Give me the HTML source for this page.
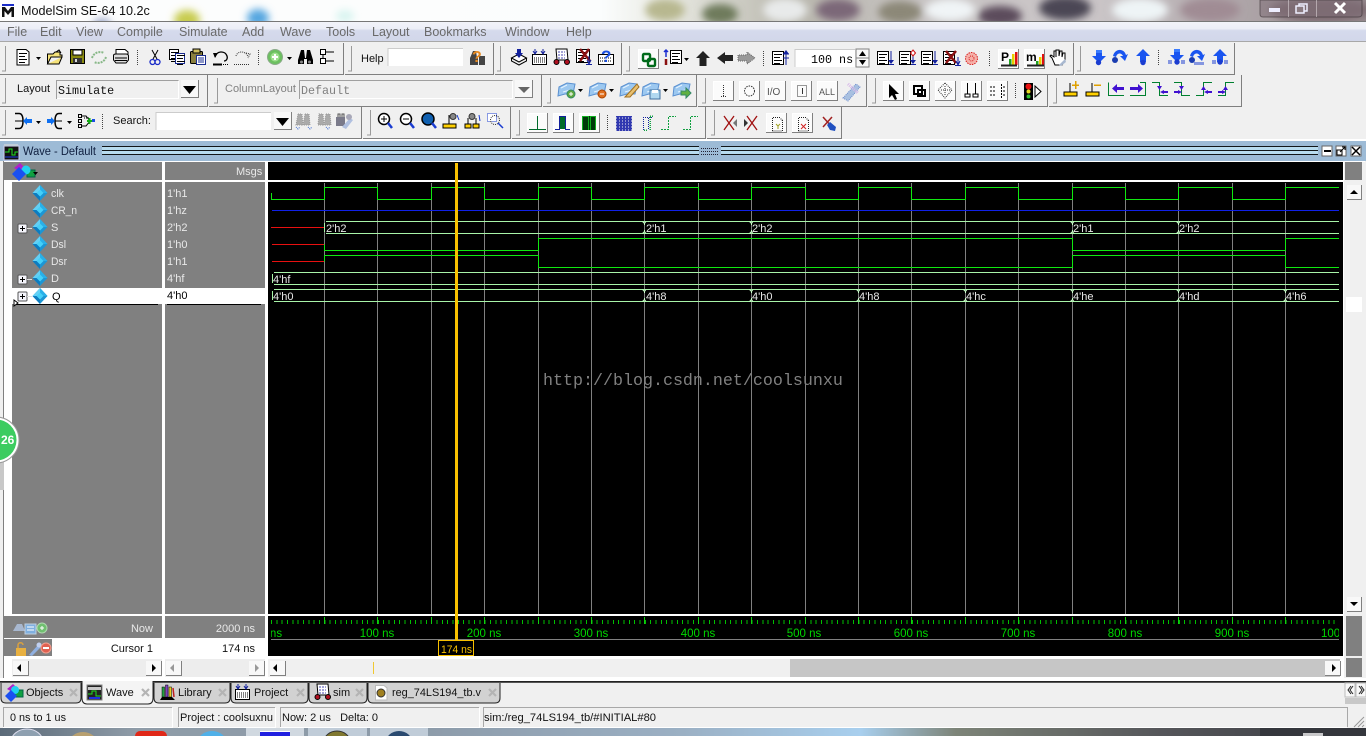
<!DOCTYPE html>
<html><head><meta charset="utf-8"><title>ModelSim SE-64 10.2c</title>
<style>
html,body{margin:0;padding:0;background:#f0f0f0;overflow:hidden}
svg{display:block;position:absolute;left:0;top:0}
text{font-family:"Liberation Sans",sans-serif;font-size:11.5px;white-space:pre}
.c{shape-rendering:crispEdges}
.m{fill:#6a6a6a;font-size:12.5px}
.n{fill:#e8e8e8;font-size:11px}
.w{fill:#e8e8e8;font-size:11px}
.r{fill:#00d800;font-size:11.5px;text-anchor:middle}
.mono{font-family:"Liberation Mono",monospace;font-size:11.7px}
.t{font-size:11px;fill:#111}
.s{font-size:11px;fill:#111}
.x{stroke:#b4b4b4;stroke-width:2.2;fill:none}
</style></head><body>
<svg width="1366" height="736" viewBox="0 0 1366 736" xmlns="http://www.w3.org/2000/svg">
<defs>
<linearGradient id="mg" x1="0" y1="0" x2="0" y2="1"><stop offset="0" stop-color="#f2f3f9"/><stop offset=".35" stop-color="#eceef7"/><stop offset=".45" stop-color="#d5daec"/><stop offset="1" stop-color="#d2d7ea"/></linearGradient>
<linearGradient id="wp" x1="0" y1="0" x2="1" y2="0"><stop offset="0" stop-color="#fdfdfd"/><stop offset=".44" stop-color="#fbfdfd"/><stop offset=".49" stop-color="#e8e9e2"/><stop offset=".58" stop-color="#b8b6ac"/><stop offset=".68" stop-color="#c8c4c4"/><stop offset=".8" stop-color="#cbc6c8"/><stop offset="1" stop-color="#968a8e"/></linearGradient>
<linearGradient id="tb" x1="0" y1="0" x2="1" y2="0"><stop offset="0" stop-color="#5b6a78"/><stop offset=".1" stop-color="#8f9ca8"/><stop offset=".3" stop-color="#8c9aa8"/><stop offset=".5" stop-color="#9bb0c4"/><stop offset=".63" stop-color="#a8cfee"/><stop offset=".7" stop-color="#7d8478"/><stop offset=".85" stop-color="#55565a"/><stop offset="1" stop-color="#3a3c42"/></linearGradient>
<filter id="b3" x="-50%" y="-50%" width="200%" height="200%"><feGaussianBlur stdDeviation="4"/></filter>
<clipPath id="top"><rect width="1366" height="22"/></clipPath>
<clipPath id="ruler"><rect x="271" y="625" width="1068" height="14"/></clipPath>
<clipPath id="bot"><rect y="728" width="1366" height="8"/></clipPath>

<g id="dia"><path d="M0-8 7.5 0 0 8-7.5 0Z" fill="#1c96d4"/><path d="M0-8-7.5 0H0Z" fill="#63d0f5"/><path d="M0-8 7.5 0H0Z" fill="#29b0e8"/><path d="M-7.5 0 0 8V0Z" fill="#0c7cc0"/><path d="M-3.5 0 0-3.5 3.5 0 0 3.5Z" fill="#45d0f8"/></g>
<g id="plus"><rect x="0" y="0" width="9" height="9" rx="1" fill="#f4f4fa" stroke="#555"/><path class="c" d="M2 4.5H7M4.5 2V7" stroke="#000" fill="none"/><path class="c" d="M9 4.5H14" stroke="#ddd" fill="none"/></g>
<g id="btn"><rect width="20" height="19" fill="#fbfbfb"/><path class="c" d="M.5 19V.5H20" stroke="#fff" fill="none"/><path class="c" d="M0 19.5H20.5V0" stroke="#808080" fill="none"/></g>
<g id="dd"><path d="M0 0H5L2.5 3Z" fill="#000"/></g>
<g id="tr"><path d="M-1.5 .5 .5 2.5 2 .5M-1.5 12.5 .5 10.5 2 12.5M.5 2.5V4M.5 9V10.5" stroke="#c8ffc8" fill="none"/></g>
<g id="flag"><path d="M1 5 9 1 17 2 15 12 7 12 0 14Z" fill="#9cc8f0" stroke="#5a90d0"/><path d="M3 6 9 3M5 10 12 8" stroke="#e4f2ff" fill="none"/></g>
<g id="step"><path d="M4 0H10V6H14L7 13 0 6H4Z" fill="#1a55f0"/><path d="M4 0H10V3H4Z" fill="#3a7cff"/></g>
<g id="stepu"><path d="M7 0 14 7H10V13H4V7H0Z" fill="#1a55f0"/></g>
<g id="over"><path d="M1 7C3-1 12-1 14 6L16 5 13 12 8 7 11 7C9 3 5 4 4 8Z" fill="#1a55f0"/><circle cx="3" cy="11" r="3" fill="#1a3cb0"/></g>
<g id="lines"><path class="c" d="M0 .5H8M0 3.5H6M0 6.5H8M0 9.5H6" stroke="#000" fill="none"/></g>
<g id="cur"><path class="c" d="M6 0V9" stroke="#000" fill="none"/><rect x="0" y="9" width="13" height="4" fill="#ffd000" stroke="#000"/></g>
</defs>

<!-- window chrome / wallpaper -->
<rect width="1366" height="22" fill="url(#wp)"/>
<g clip-path="url(#top)" filter="url(#b3)">
<ellipse cx="187" cy="20" rx="13" ry="10" fill="#c8cc50"/><ellipse cx="258" cy="18" rx="11" ry="9" fill="#55a6e0"/><ellipse cx="102" cy="23" rx="9" ry="4" fill="#8d9ac0"/><ellipse cx="345" cy="16" rx="9" ry="6" fill="#d8f4f0"/>
<ellipse cx="665" cy="10" rx="20" ry="11" fill="#b8b890"/><ellipse cx="720" cy="14" rx="18" ry="10" fill="#6e7a5c"/><ellipse cx="785" cy="10" rx="22" ry="12" fill="#e8eaea"/><ellipse cx="838" cy="10" rx="22" ry="11" fill="#7c6878"/><ellipse cx="900" cy="12" rx="22" ry="11" fill="#8c8878"/><ellipse cx="950" cy="10" rx="25" ry="11" fill="#f0f4f6"/><ellipse cx="1000" cy="16" rx="22" ry="10" fill="#5c4c5c"/><ellipse cx="1065" cy="8" rx="26" ry="12" fill="#4c4654"/><ellipse cx="1140" cy="10" rx="28" ry="12" fill="#eef4f6"/><ellipse cx="1210" cy="10" rx="30" ry="12" fill="#a08c94"/><ellipse cx="1320" cy="10" rx="50" ry="12" fill="#7a686e"/>
</g>
<path d="M1260 0V14Q1260 17 1263 17H1358Q1362 17 1362 14V0Z" fill="#7f6f78" fill-opacity=".55" stroke="#3a3236" stroke-opacity=".6"/>
<path class="c" d="M1288.5 0V17M1316.5 0V17" stroke="#d8d0d4" stroke-opacity=".6"/>
<rect x="1269" y="8" width="11" height="4" fill="#eef"/>
<rect x="1299" y="4" width="8" height="7" fill="none" stroke="#eef" stroke-width="1.5"/><rect x="1296" y="6" width="8" height="7" fill="#8a7a80" stroke="#eef" stroke-width="1.5"/>
<path d="M1335 3 1345 13M1345 3 1335 13" stroke="#fff" stroke-width="3"/>
<rect x="2" y="4" width="12" height="2" fill="#1a2cc8"/>
<path d="M2 17V7H5L8 11 11 7H14V17H11.5V11L8 15 4.5 11V17Z" fill="#111"/>
<text x="21" y="15" style="font-size:12.6px" fill="#111">ModelSim SE-64 10.2c</text>

<!-- menu -->
<rect y="21" width="1366" height="1" fill="#777"/>
<rect y="22" width="1366" height="19" fill="url(#mg)"/>
<rect y="41" width="1366" height="1" fill="#a8a8a8"/>
<text class="m" x="7" y="36">File</text><text class="m" x="40" y="36">Edit</text><text class="m" x="76" y="36">View</text><text class="m" x="117" y="36">Compile</text><text class="m" x="179" y="36">Simulate</text><text class="m" x="242" y="36">Add</text><text class="m" x="280" y="36">Wave</text><text class="m" x="326" y="36">Tools</text><text class="m" x="372" y="36">Layout</text><text class="m" x="424" y="36">Bookmarks</text><text class="m" x="505" y="36">Window</text><text class="m" x="566" y="36">Help</text>

<!-- toolbars frames -->
<rect y="42" width="1366" height="97" fill="#f0f0f0"/>
<path class="c" fill="none" stroke="#7f7f7f" d="M0 74.5H343.5V43M345 74.5H493.5V43M495 74.5H621.5V43M623 74.5H1073.5V43M1075 74.5H1234.5V43
M0 106.5H207.5V75M209 106.5H541.5V75M543 106.5H696.5V75M698 106.5H866.5V75M868 106.5H1047.5V75M1049 106.5H1241.5V75
M0 138.5H361.5V107M363 138.5H510.5V107M512 138.5H705.5V107M707 138.5H841.5V107"/>
<path class="c" fill="none" stroke="#9a9a9a" d="M5.5 46V71H2M351.5 46V71H348M500.5 46V71H497M629.5 46V71H626M1080.5 46V71H1077M5.5 78V103H2M217.5 78V103H214M550.5 78V103H547M705.5 78V103H702M875.5 78V103H872M1056.5 78V103H1053M5.5 110V135H2M370.5 110V135H367M519.5 110V135H516M714.5 110V135H711"/>
<path class="c" stroke="#444" stroke-dasharray="1 1" fill="none" d="M137.5 50V65M258.5 50V65M763.5 51V66M989.5 51V66M1158.5 50V65M1015.5 83V99M102.5 114V129M607.5 115V131"/>

<!-- row 1 -->
<g transform="translate(16,49)"><path d="M1 .5H10L13 3V16H1Z" fill="#fff" stroke="#000"/><use href="#lines" x="3" y="4"/></g><use href="#dd" x="36" y="57"/>
<g transform="translate(47,50)"><path d="M.5 14V4H6L8 2H13V5H15V7H4L.5 14H12L15 7" fill="#f5e27a" stroke="#000"/><path d="M9 2 12 0 14 3" fill="none" stroke="#000"/></g>
<g transform="translate(70,49)"><rect x=".5" y=".5" width="14" height="14" fill="#8a8a10" stroke="#000"/><rect x="3" y="1" width="9" height="5" fill="#fff" stroke="#000"/><rect x="3" y="9" width="9" height="5" fill="#333"/><rect x="5" y="10" width="2" height="3" fill="#ddd"/></g>
<g transform="translate(91,50)" fill="none" stroke="#88b888" stroke-width="2" stroke-dasharray="2 1"><path d="M1 8C3 2 9 1 13 3M15 7C13 13 7 14 3 12"/></g>
<g transform="translate(113,49)"><path d="M3 5V.5H12L15 3V5" fill="#fff" stroke="#000"/><path d="M.5 6.5C.5 5 2 5 3 5H13C15 5 15.5 6 15.5 7V11L13 14H3L.5 11Z" fill="#ddd" stroke="#000"/><path d="M2 9H14M2 11.5H14" stroke="#000"/></g>
<g transform="translate(150,50)" fill="none" stroke="#000"><path d="M2 0 7 9M8 0 3 9"/><circle cx="2.5" cy="12" r="2.5" stroke="#1a2cc8" stroke-width="1.3"/><circle cx="7.5" cy="12" r="2.5" stroke="#1a2cc8" stroke-width="1.3"/></g>
<g transform="translate(169,49)"><rect x=".5" y=".5" width="9" height="10" fill="#fff" stroke="#000"/><use href="#lines" x="2" y="3"/><rect x="6.5" y="4.5" width="9" height="10" fill="#fff" stroke="#1a2c90"/><use href="#lines" x="8" y="6"/></g>
<g transform="translate(190,48)"><rect x=".5" y="3.5" width="12" height="12" rx="1" fill="#8a8040" stroke="#000"/><rect x="3" y="1" width="7" height="4" fill="#d0c060" stroke="#000"/><rect x="6.5" y="7.5" width="9" height="9" fill="#fff" stroke="#1a2c90"/><path class="c" d="M8 10H14M8 12H14M8 14H14" stroke="#1a2c90"/></g>
<g transform="translate(213,50)"><path d="M2 7C3 1 12 0 14 6 15 9 13 11 11 11" fill="none" stroke="#000" stroke-width="1.3"/><path d="M0 3 5 3 2 8Z" fill="#000"/><path class="c" d="M0 14.5H9" stroke="#000" stroke-width="2"/><path class="c" d="M10 14.5H15" stroke="#000" stroke-dasharray="1 1"/></g>
<g transform="translate(234,50)" stroke="#333" stroke-dasharray="1 1" fill="none"><path d="M2 6C3 1 12 0 14 7"/><path d="M0 14.5H15M12 3 16 4 14 8"/></g>
<circle cx="275" cy="57" r="7.5" fill="#6cc060" stroke="#8aaa88"/><circle cx="275" cy="57" r="4.5" fill="#a0e090"/><path class="c" d="M272 57H278M275 54V60" stroke="#fff" stroke-width="2"/>
<use href="#dd" x="287" y="57"/>
<g transform="translate(298,50)"><path d="M3 0H6L7 8H8L9 0H12L15 10V14H9V9H6V14H0V10Z" fill="#000"/><circle cx="3.5" cy="12" r="1.5" fill="#888"/><circle cx="11.5" cy="12" r="1.5" fill="#888"/></g>
<g transform="translate(320,49)" fill="none" stroke="#000"><rect x=".5" y=".5" width="5" height="5" fill="#fff"/><rect x=".5" y="9.5" width="5" height="5" fill="#fff"/><path class="c" d="M6 3H14M6 12H14M3 6V9"/></g>
<text x="361" y="62" class="t">Help</text>
<rect x="388" y="48" width="75" height="18" fill="#fff"/><path class="c" d="M388 66V48.5H463" stroke="#ccc" fill="none"/>
<g transform="translate(470,49)"><path d="M3 2H6L7 9H8V16H0V9Z" fill="#444"/><path d="M9 7H15V16H9Z" fill="#444"/><text x="2" y="13" style="font-size:16px;font-weight:bold;fill:#e88a20">?</text></g>
<g transform="translate(511,49)"><path d="M.5 9 8 5 15.5 9 8 13Z" fill="#fff" stroke="#000"/><path d="M.5 9V12L8 16 15.5 12V9" fill="none" stroke="#000"/><path d="M6 0H10V4H12L8 9 4 4H6Z" fill="#12209c"/></g>
<g transform="translate(532,49)"><rect x=".5" y="5.5" width="14" height="10" fill="#fff" stroke="#000"/><path class="c" d="M2 9H13M2 11H13M2 13H13" stroke="#000" stroke-dasharray="1 1"/><path d="M3 0V4M1 2 3 5 5 2M11 0V4M9 2 11 5 13 2" stroke="#12209c" fill="none"/></g>
<g transform="translate(553,49)"><path d="M3 0H14L15 11H4Z" fill="#fff" stroke="#000"/><path class="c" d="M5 3H12M5 6H12M5 9H12" stroke="#4a4ab0" stroke-dasharray="2 1"/><circle cx="3.5" cy="13" r="2.5" fill="#b01020" stroke="#000"/><circle cx="14" cy="13" r="2.5" fill="#b01020" stroke="#000"/></g>
<g transform="translate(576,49)"><rect x=".5" y=".5" width="13" height="13" fill="#fff" stroke="#000"/><use href="#lines" x="2" y="3"/><path d="M4 0 14 12M13 0 4 12" stroke="#8a1010" stroke-width="2.5"/><path d="M13 7V14M11 11 13 15 15 11M10 15.5H16" stroke="#12209c" fill="none"/></g>
<g transform="translate(598,49)"><rect x=".5" y="5.5" width="15" height="10" fill="#fff" stroke="#000"/><path class="c" d="M2 9H14M2 12H14" stroke="#000" stroke-dasharray="1 1"/><text x="3" y="13" style="font-size:17px;font-weight:bold;fill:#1a50e0">?</text></g>

<!-- row1 toolbar 4 -->
<use href="#btn" x="638" y="49"/>
<g transform="translate(642,53)" fill="none" stroke="#006a1a" stroke-width="2.4"><rect x="1" y="1" width="7" height="7" rx="1"/><rect x="6" y="6" width="7" height="7" rx="1"/></g>
<g transform="translate(664,50)"><path d="M2 0V7M0 2 2 0 4 2" stroke="#1a2cd0" fill="none" stroke-width="1.5"/><path d="M2 9V15" stroke="#8a1010" stroke-width="2.5"/><rect x="6.5" y=".5" width="11" height="13" fill="#fff" stroke="#000"/><use href="#lines" x="8" y="3"/></g><use href="#dd" x="684" y="58"/>
<path d="M703 51 710 58H706.5V66H699.5V58H696Z" fill="#222"/>
<path d="M717 58 725 52V55H733V61H725V64Z" fill="#222"/>
<path d="M755 58 747 52V55H738V61H747V64Z" fill="#999" stroke="#666" stroke-dasharray="1 1"/>
<g transform="translate(772,50)"><rect x=".5" y="1.5" width="11" height="13" fill="#fff" stroke="#000"/><use href="#lines" x="2" y="4"/><path d="M14 3V15M11 4H17M11 8H17" stroke="#12209c" fill="none"/><path d="M11 4 14 0 17 4" fill="#12209c"/></g>
<rect x="795" y="49" width="60" height="18" fill="#fff"/><path class="c" d="M795 67V49.5H855" stroke="#ccc" fill="none"/>
<text class="mono" x="811" y="63" style="font-size:11.7px">100 ns</text>
<rect x="856" y="49" width="13" height="18" fill="#f8f8f8" stroke="#808080"/><path d="M859 56 862.5 51 866 56Z M859 60H866L862.5 65Z" fill="#000"/><path class="c" d="M856 58H869" stroke="#808080"/>
<g transform="translate(877,50)"><rect x=".5" y="1.5" width="11" height="13" fill="#fff" stroke="#000"/><use href="#lines" x="2" y="4"/><path d="M14 1V13M12 14.5H17" stroke="#12209c" fill="none"/><path d="M11 10 14 14 17 10" fill="#12209c"/></g>
<g transform="translate(899,50)"><rect x=".5" y="1.5" width="11" height="13" fill="#fff" stroke="#000"/><use href="#lines" x="2" y="4"/><path d="M14 6V13M12 14.5H17" stroke="#12209c" fill="none"/><path d="M11 10 14 14 17 10" fill="#12209c"/><path d="M14 0 16.5 3 14 6 11.5 3Z" fill="#fff" stroke="#d01010"/></g>
<g transform="translate(921,50)"><rect x=".5" y="1.5" width="11" height="13" fill="#fff" stroke="#000"/><use href="#lines" x="2" y="4"/><path d="M14 1V13M12 14.5H17" stroke="#12209c" fill="none"/><path d="M11 10 14 14 17 10" fill="#12209c"/></g>
<g transform="translate(943,50)"><rect x=".5" y="1.5" width="11" height="13" fill="#fff" stroke="#000"/><use href="#lines" x="2" y="4"/><path d="M3 1 13 13M13 1 3 13" stroke="#8a1010" stroke-width="2.5"/><path d="M15 7V14M13 11 15 15 17 11M12 15.5H18" stroke="#12209c" fill="none"/></g>
<circle cx="971.5" cy="58.5" r="6" fill="#f5b0a8" stroke="#d82020" stroke-dasharray="1.5 1"/><circle cx="971.5" cy="58.5" r="2.5" fill="none" stroke="#d82020" stroke-dasharray="1 1"/>
<use href="#btn" x="998" y="49"/>
<g transform="translate(1001,51)"><text x="0" y="10" style="font-weight:bold;font-size:12px;fill:#000">P</text><rect x="8" y="8" width="2.5" height="6" fill="#20a020"/><rect x="11" y="3" width="2.5" height="11" fill="#e8d000"/><rect x="14" y="1" width="2.5" height="13" fill="#e01010"/><path class="c" d="M0 14.5H16" stroke="#222" stroke-width="2"/></g>
<use href="#btn" x="1024" y="49"/>
<g transform="translate(1027,51)"><text x="-1" y="10" style="font-weight:bold;font-size:12px;fill:#000">m</text><rect x="9" y="10" width="2.5" height="4" fill="#20a020"/><rect x="12" y="6" width="2.5" height="8" fill="#e8d000"/><rect x="15" y="3" width="2" height="11" fill="#e01010"/><path class="c" d="M0 14.5H17" stroke="#222" stroke-width="2"/></g>
<g transform="translate(1050,50)"><path d="M2 8 0 6 1 5 4 7V1H6V6 7 0H9V6L10 1H12V7L13 3H15V10L12 15H5Z" fill="#fff" stroke="#000"/><path d="M9 15 15 9 16 12 11 16Z" fill="#a8b8d0"/></g>

<!-- row1 toolbar 5 -->
<use href="#step" x="1092" y="50"/><circle cx="1098.5" cy="62.5" r="2.7" fill="#1a3cd0"/>
<use href="#over" x="1112" y="49"/>
<use href="#stepu" x="1136" y="49"/><circle cx="1143" cy="62.5" r="2.7" fill="#1a3cd0"/>
<g transform="translate(1170,49)"><use href="#step"/><circle cx="7" cy="13" r="2.7" fill="#1a3cd0"/><path class="c" d="M-1 11V15M1 11V15M12 11V15M14 11V15" stroke="#1a3cd0"/></g>
<g transform="translate(1189,49)"><use href="#over"/><path class="c" d="M6 13V16M8 13V16M10 13V16M12 13V16M14 13V16" stroke="#1a3cd0"/></g>
<g transform="translate(1213,49)"><use href="#stepu"/><circle cx="7" cy="13" r="2.7" fill="#1a3cd0"/><path class="c" d="M0 11V15M2 11V15M12 11V15M14 11V15" stroke="#1a3cd0"/></g>

<!-- row 2 -->
<text x="17" y="92" class="t">Layout</text>
<rect x="56" y="80" width="123" height="19" fill="#f0f0f0"/><path class="c" d="M56.5 99V80.5H178.5" stroke="#a0a0a0" fill="none"/><path class="c" d="M57 98.5H178.5V81" stroke="#fff" fill="none"/>
<text class="mono" x="58" y="94" fill="#111">Simulate</text>
<rect x="181" y="80" width="17" height="17" fill="#f8f8f8"/><path class="c" d="M181 97.5H198.5V80" stroke="#808080" fill="none"/><path d="M183 86H196L189.5 94Z" fill="#000"/>
<text x="225" y="92" class="t" style="fill:#808080">ColumnLayout</text>
<rect x="299" y="80" width="214" height="19" fill="#f0f0f0"/><path class="c" d="M299.5 99V80.5H512.5" stroke="#a0a0a0" fill="none"/><path class="c" d="M300 98.5H512.5V81" stroke="#fff" fill="none"/>
<text class="mono" x="301" y="94" fill="#808080">Default</text>
<rect x="515" y="80" width="17" height="17" fill="#f8f8f8"/><path class="c" d="M515 97.5H532.5V80" stroke="#808080" fill="none"/><path d="M518 87H530L524 93Z" fill="#666"/>
<use href="#flag" x="558" y="82"/><circle cx="571" cy="94" r="4" fill="#60a840" stroke="#386"/><path class="c" d="M569 94H573M571 92V96" stroke="#fff"/><use href="#dd" x="578" y="89"/>
<use href="#flag" x="589" y="82"/><circle cx="602" cy="94" r="4" fill="#e07020" stroke="#a40"/><path class="c" d="M600 94H604" stroke="#fff"/><use href="#dd" x="609" y="89"/>
<use href="#flag" x="620" y="82"/><path d="M625 97 637 84 639 87 630 97Z" fill="#e8c070" stroke="#a07020"/>
<use href="#flag" x="642" y="82"/><rect x="650" y="90" width="10" height="9" fill="#b0d8f0" stroke="#4070a0"/><rect x="652" y="90" width="6" height="3" fill="#fff"/><use href="#dd" x="663" y="89"/>
<use href="#flag" x="673" y="82"/><path d="M681 91H686V88L691 93 686 98V95H681Z" fill="#60b040" stroke="#386"/>
<use href="#btn" x="713" y="81"/><use href="#btn" x="739" y="81"/><use href="#btn" x="765" y="81"/><use href="#btn" x="791" y="81"/><use href="#btn" x="817" y="81"/>
<path class="c" d="M723.5 85V97M721 96.5H726" stroke="#333" stroke-dasharray="1 1"/>
<circle cx="749.5" cy="91" r="5" fill="none" stroke="#333" stroke-dasharray="1.5 1"/>
<text x="767" y="95" style="font-size:10px;fill:#555">I/O</text>
<rect x="797.5" y="85.5" width="9" height="11" fill="none" stroke="#333" stroke-dasharray="1 1"/><path class="c" d="M802.5 88V94" stroke="#333"/>
<text x="819" y="95" style="font-size:9px;fill:#555">ALL</text>
<path d="M843 98 856 84 860 87 848 101Z" fill="#a8c0e0" stroke="#6a8acc" stroke-dasharray="1 1"/><path d="M848 84 858 93" stroke="#d8b8e8" stroke-width="3" stroke-dasharray="1 1"/>
<use href="#btn" x="883" y="81"/><path d="M889 84V98L892 95 895 100 897 99 895 94H899Z" fill="#000"/>
<use href="#btn" x="909" y="81"/><g fill="none" stroke="#000" stroke-width="2"><rect x="914" y="86" width="8" height="8"/><rect x="918" y="90" width="7" height="6"/></g>
<use href="#btn" x="935" y="81"/><g stroke="#333" stroke-dasharray="1 1" fill="none"><path d="M945 83 952 90 945 98 938 90Z"/><path d="M945 86V95M941 90H950"/></g>
<use href="#btn" x="961" y="81"/><path class="c" d="M967.5 83V95M975.5 83V95" stroke="#000"/><rect x="965" y="94" width="5" height="3" fill="#fff" stroke="#000"/><rect x="973" y="94" width="5" height="3" fill="#fff" stroke="#000"/>
<use href="#btn" x="987" y="81"/><path class="c" d="M990 87H996M990 91H996M990 95H996M1001.5 84V98M1003 87H1006M1003 91H1006M1003 95H1006" stroke="#000" stroke-dasharray="2 1"/>
<rect x="1024" y="83" width="9" height="17" fill="#000"/><circle cx="1028.5" cy="86.5" r="3" fill="#e81010"/><circle cx="1028.5" cy="91.5" r="2" fill="#e8d820"/><circle cx="1028.5" cy="96.5" r="2" fill="#30c030"/>
<path d="M1035 86V97L1041 91.5Z" fill="#fff" stroke="#000"/>
<g transform="translate(1064,81)"><use href="#cur" y="2"/><path class="c" d="M8 4H15M11.5 0V8" stroke="#e0a000" stroke-width="1.5"/></g>
<g transform="translate(1086,81)"><use href="#cur" y="2"/><path class="c" d="M8 4H15" stroke="#e0a000" stroke-width="1.5"/></g>
<g fill="none" stroke="#008030" class="c"><path d="M1108.5 82.5V95.5H1124M1130 95.5H1145.5V82.5H1140"/><path d="M1152 82.5H1159.5V95.5H1168M1174 82.5H1181.5V95.5H1190M1196 95.5H1203.5V82.5H1212M1218 95.5H1225.5V82.5H1234"/></g>
<g fill="#4010d0"><path d="M1112 88.5 1117 84V87H1124V90H1117V93Z"/><path d="M1143 88.5 1138 84V87H1130V90H1138V93Z"/><path d="M1160 92 1164 90V91H1168V93H1164V94Z M1157 86H1162L1159.5 90Z"/><path d="M1182 92 1178 90V91H1174V93H1178V94Z M1179 86H1184L1181.5 90Z"/><path d="M1204 92 1208 90V91H1212V93H1208V94Z M1201 90H1206L1203.5 86Z"/><path d="M1226 92 1222 90V91H1218V93H1222V94Z M1223 90H1228L1225.5 86Z"/></g>

<!-- row 3 -->
<g transform="translate(15,113)"><path d="M0 .5H4C7 .5 8 4 8 8 8 12 7 15.5 4 15.5H0" fill="none" stroke="#000" stroke-width="1.5"/><path d="M0 8H8" stroke="#000"/><path d="M8 8 12 4V6H17V10H12V12Z" fill="#1070f0"/></g><use href="#dd" x="36" y="121"/>
<g transform="translate(47,113)"><path d="M15 .5H12C9 .5 8 4 8 8 8 12 9 15.5 12 15.5H15" fill="none" stroke="#000" stroke-width="1.5"/><path d="M8 8H15" stroke="#000"/><path d="M8 8 4 4V6H0V10H4V12Z" fill="#1070f0"/></g><use href="#dd" x="67" y="121"/>
<g transform="translate(78,113)" fill="none" stroke="#000"><rect x=".5" y="1.5" width="3" height="3"/><rect x=".5" y="11.5" width="3" height="3"/><rect x=".5" y="6.5" width="3" height="3"/><path d="M4 3H8L12 8 8 13H4"/><path d="M11 5H5" stroke-dasharray="1 1"/><path d="M9 8H14M11.5 5V11" stroke="#10b010" stroke-width="2"/><rect x="14" y="6" width="3" height="3" fill="#1a50e0" stroke="none"/></g>
<text x="113" y="124" class="t">Search:</text>
<rect x="156" y="112" width="115" height="18" fill="#fff"/><path class="c" d="M156 130V112.5H271" stroke="#ccc" fill="none"/>
<rect x="274" y="112" width="17" height="17" fill="#f8f8f8"/><path class="c" d="M274 129.5H291.5V112" stroke="#808080" fill="none"/><path d="M276 118H289L282.5 126Z" fill="#000"/>
<g transform="translate(295,113)" fill="#888" stroke="#999" stroke-dasharray="1 1"><path d="M3 1H7L8 12H1ZM10 1H14L15 12H8Z" fill="#aaa"/><path d="M1 14 3 16 5 14M13 14 15 16 17 14" fill="none" stroke="#3a6ad0"/></g>
<g transform="translate(318,113)" fill="#888" stroke="#999" stroke-dasharray="1 1"><path d="M1 1H5L6 12H0ZM8 1H12L13 12H6Z" fill="#aaa"/><path d="M8 14 10 16 12 14" fill="none" stroke="#3a6ad0"/></g>
<g transform="translate(336,113)"><rect x="0" y="4" width="9" height="9" fill="#7a7a8a"/><path d="M2 4V1H4V4M6 4V1H8V4" fill="none" stroke="#555"/><path d="M6 14 14 5 17 7 10 16Z" fill="#b0c0e0"/><circle cx="13" cy="4" r="3" fill="#a8a8b8"/></g>
<g fill="none"><circle cx="384" cy="119" r="5.5" stroke="#000" stroke-width="1.5" fill="#fff"/><path class="c" d="M381 119H387M384 116V122" stroke="#000"/><path d="M388 123 392 128" stroke="#1a3cd0" stroke-width="2.5"/>
<circle cx="406" cy="119" r="5.5" stroke="#000" stroke-width="1.5" fill="#fff"/><path class="c" d="M403 119H409" stroke="#000"/><path d="M410 123 414 128" stroke="#1a3cd0" stroke-width="2.5"/>
<circle cx="428" cy="119" r="6" stroke="#000" stroke-width="1.5" fill="#1060b0"/><path d="M432 123 436 128" stroke="#1a3cd0" stroke-width="2.5"/></g>
<g transform="translate(443,113)"><use href="#cur" y="2"/><circle cx="10" cy="3.5" r="3" fill="#888" stroke="#333"/><path d="M14 2 16 7" stroke="#1a3cd0"/></g>
<g transform="translate(465,113)"><path class="c" d="M3 5V11M11 5V11" stroke="#000"/><rect x="0" y="11" width="6" height="4" fill="#ffd000" stroke="#000"/><rect x="8" y="11" width="6" height="4" fill="#ffd000" stroke="#000"/><circle cx="7" cy="3.5" r="3" fill="#888" stroke="#333"/><path d="M14 2 15 8" stroke="#1a3cd0"/></g>
<g transform="translate(487,113)"><rect x=".5" y=".5" width="9" height="8" fill="#fff" stroke="#1a3cd0" stroke-dasharray="1 1"/><circle cx="8" cy="7" r="4.5" fill="none" stroke="#333" stroke-dasharray="1 1"/><path d="M11 10 16 15" stroke="#1a3cd0" stroke-width="1.5"/></g>
<use href="#btn" x="527" y="113"/><path class="c" d="M537.5 116V129M529 129.5H546" stroke="#006a2a" fill="none"/>
<use href="#btn" x="553" y="113"/><path class="c" d="M555 129.5H559.5V116.5H565.5V129.5H570" stroke="#12209c" fill="none"/><rect x="560" y="117" width="5" height="12" fill="#006a2a"/>
<use href="#btn" x="579" y="113"/><rect x="582" y="116" width="14" height="14" fill="#003a0a"/><path class="c" d="M582.5 130V116.5H588.5V130M590.5 130V116.5H595.5V130" stroke="#10b020" fill="none"/>
<rect x="616" y="116" width="16" height="15" fill="#3038b0"/><path d="M616 118H632M616 121H632M616 124H632M616 127H632M616 130H632" stroke="#f0f0f0" stroke-dasharray="1 2" class="c"/>
<path class="c" d="M643.5 130V117.5H653M648.5 118V130" stroke="#12209c" stroke-dasharray="1 1" fill="none"/><path class="c" d="M644 130H648M650 130V116H654" stroke="#10a040" stroke-dasharray="1 1" fill="none" stroke-width="1.5"/>
<path class="c" d="M661 129.5H668.5V116.5H676" stroke="#10a040" stroke-dasharray="2 1" fill="none"/>
<path class="c" d="M683 129.5H690.5V116.5H698" stroke="#10a040" stroke-dasharray="2 1" fill="none"/>
<path d="M724 116 734 130M734 116 724 130" stroke="#a01010" stroke-width="1.3"/><path d="M737 119V127L733 123Z" fill="#777"/>
<path d="M747 116 757 130M757 116 747 130" stroke="#a01010" stroke-width="1.3"/><path d="M744 119V127L748 123Z" fill="#333"/>
<use href="#btn" x="766" y="113"/><path class="c" d="M772.5 131V117.5H779.5L782.5 120.5V131H772.5" stroke="#222" stroke-dasharray="1 1" fill="none"/><path d="M776 124 778 126 780 124M778 126V129" stroke="#a0a020" fill="none"/>
<use href="#btn" x="792" y="113"/><path class="c" d="M798.5 131V117.5H805.5L808.5 120.5V131H798.5" stroke="#222" stroke-dasharray="1 1" fill="none"/><path d="M801 124 806 129M806 124 801 129" stroke="#d02020"/>
<path d="M823 117 832 127M832 117 823 127" stroke="#a02020" stroke-width="1.5"/><path d="M830 122 836 127 835 131 830 130 827 125Z" fill="#2050c0"/>

<!-- wave window -->
<rect y="139" width="1366" height="2" fill="#fff"/>
<rect y="141" width="1366" height="20" fill="#9dbbd6"/>
<rect x="4" y="146" width="15" height="14" fill="#222" stroke="#cce"/><rect x="5" y="147" width="13" height="12" fill="#111"/><path class="c" d="M5 152H9V149H12V155H15V152H18" stroke="#20e020" fill="none"/><path class="c" d="M5 157H18" stroke="#2040e0"/><rect x="4" y="144" width="14" height="2" fill="#c0ccd8"/>
<text x="23" y="155" style="font-size:11.5px;fill:#102040" textLength="73" lengthAdjust="spacingAndGlyphs">Wave - Default</text>
<rect x="102" y="146" width="1216" height="9" fill="#b8dcef"/>
<path class="c" d="M102 146.5H1318M102 150.5H1318M102 154.5H1318" stroke="#000" stroke-opacity=".9"/>
<rect x="699" y="146" width="22" height="10" fill="#9dbbd6"/>
<path class="c" d="M701 148.5H719M701 151.5H719M701 154.5H719" stroke="#223" stroke-dasharray="1 1"/>
<rect x="1322" y="146" width="10" height="10" fill="#fff" stroke="#666"/><rect x="1324" y="150" width="7" height="2" fill="#000"/>
<rect x="1336" y="146" width="10" height="10" fill="#fff" stroke="#666"/><rect x="1337" y="150" width="5" height="5" fill="none" stroke="#000"/><path d="M1340 152 1345 147M1342 147H1345V150" stroke="#000" fill="none"/>
<rect x="1351" y="146" width="10" height="10" fill="#fff" stroke="#666"/><path d="M1352 147 1360 155M1360 147 1352 155" stroke="#000" stroke-width="1.5"/>

<!-- panes -->
<rect x="0" y="161" width="1366" height="519" fill="#f0f0f0"/>
<rect x="3" y="161" width="1362" height="1" fill="#fff"/>
<rect x="3" y="161" width="1" height="517" fill="#808080"/>
<rect x="4" y="162" width="1340" height="516" fill="#fff"/>
<rect x="4" y="162" width="158" height="18" fill="#808080"/>
<rect x="165" y="162" width="100" height="18" fill="#808080"/>
<rect x="268" y="162" width="1075" height="18" fill="#000"/>
<rect x="1345" y="162" width="17" height="18" fill="#808080"/>
<rect x="12" y="182" width="150" height="432" fill="#808080"/>
<rect x="165" y="182" width="100" height="432" fill="#808080"/>
<rect x="268" y="182" width="1075" height="432" fill="#000"/>
<rect x="12" y="288" width="150" height="16" fill="#fff"/>
<rect x="165" y="288" width="100" height="16" fill="#fff"/>
<path class="c" d="M15 304.5H158M167 304.5H261" stroke="#000"/>
<path d="M14 300V306L18 303Z" fill="#fff" stroke="#000"/>

<!-- header icon -->
<g transform="translate(13,163)"><path d="M7 0 13 6 8 9 1 5Z" fill="#b020c8"/><rect x="14" y="7" width="8" height="7" fill="#10a040" stroke="#064"/><circle cx="13" cy="7" r="4.5" fill="#20d0f0"/><path d="M6 4 13 11 6 18-1 11Z" fill="#1a50f0"/></g>
<path d="M33 172H38L35.5 175Z" fill="#000"/>
<text x="236" y="175" style="font-size:11px;fill:#e8e8e8">Msgs</text>

<!-- signal names -->
<use href="#dia" x="40" y="193"/><use href="#dia" x="40" y="210"/><use href="#dia" x="40" y="227"/><use href="#dia" x="40" y="244"/><use href="#dia" x="40" y="261"/><use href="#dia" x="40" y="278"/><use href="#dia" x="40" y="296"/>
<use href="#plus" x="18" y="224"/><use href="#plus" x="18" y="275"/><use href="#plus" x="18" y="292"/>
<text class="n" x="51" y="197" textLength="13" lengthAdjust="spacingAndGlyphs">clk</text><text class="n" x="51" y="214" textLength="26" lengthAdjust="spacingAndGlyphs">CR_n</text><text class="n" x="51" y="231">S</text><text class="n" x="51" y="248" textLength="15" lengthAdjust="spacingAndGlyphs">Dsl</text><text class="n" x="51" y="265" textLength="16" lengthAdjust="spacingAndGlyphs">Dsr</text><text class="n" x="51" y="282">D</text><text x="52" y="300" style="font-size:11px;fill:#000">Q</text>
<text class="n" x="167" y="197">1'h1</text><text class="n" x="167" y="214">1'hz</text><text class="n" x="167" y="231">2'h2</text><text class="n" x="167" y="248">1'h0</text><text class="n" x="167" y="265">1'h1</text><text class="n" x="167" y="282">4'hf</text><text x="167" y="299" style="font-size:11px;fill:#000">4'h0</text>

<!-- grid -->
<path class="c" stroke="#808080" d="M324.5 183V614M377.5 183V614M431.5 183V614M484.5 183V614M538.5 183V614M591.5 183V614M644.5 183V614M698.5 183V614M751.5 183V614M805.5 183V614M858.5 183V614M911.5 183V614M965.5 183V614M1018.5 183V614M1072.5 183V614M1125.5 183V614M1178.5 183V614M1232.5 183V614M1285.5 183V614"/>

<!-- watermark -->
<text x="543" y="385" style="font-family:'Liberation Mono',monospace;font-size:16.67px;fill:#808080">http://blog.csdn.net/coolsunxu</text>

<!-- waves -->
<g class="c" fill="none">
<path stroke="#10e810" d="M271.5 193V199.5H324.5V187.5H377.5V199.5H431.5V187.5H484.5V199.5H538.5V187.5H591.5V199.5H644.5V187.5H698.5V199.5H751.5V187.5H805.5V199.5H858.5V187.5H911.5V199.5H965.5V187.5H1018.5V199.5H1072.5V187.5H1125.5V199.5H1178.5V187.5H1232.5V199.5H1285.5V187.5H1339"/>
<path stroke="#1020e8" d="M272 210.5H1339" stroke-width="1"/>
<path stroke="#e81010" d="M271 227.5H324M272 244.5H324M272 261.5H324"/>
<path stroke="#10e810" d="M324.5 244.5V250.5H538.5V238.5H1072.5V250.5H1285.5V238.5H1339"/>
<path stroke="#10e810" d="M324.5 261.5V255.5H538.5V267.5H1072.5V255.5H1285.5V267.5H1339"/>
<path stroke="#a8f4a8" d="M326 221.5H1339M326 233.5H1339M324.5 223V232"/>
<path stroke="#a8f4a8" d="M274 272.5H1339M274 284.5H1339M272.5 274V283"/>
<path stroke="#a8f4a8" d="M274 289.5H1339M274 301.5H1339M272.5 291V300"/>
</g>
<use href="#tr" x="644" y="221"/><use href="#tr" x="751" y="221"/><use href="#tr" x="1072" y="221"/><use href="#tr" x="1178" y="221"/>
<use href="#tr" x="644" y="289"/><use href="#tr" x="751" y="289"/><use href="#tr" x="858" y="289"/><use href="#tr" x="965" y="289"/><use href="#tr" x="1072" y="289"/><use href="#tr" x="1178" y="289"/><use href="#tr" x="1285" y="289"/>
<text class="w" x="326" y="232">2'h2</text><text class="w" x="646" y="232">2'h1</text><text class="w" x="752" y="232">2'h2</text><text class="w" x="1073" y="232">2'h1</text><text class="w" x="1179" y="232">2'h2</text>
<text class="w" x="273" y="283">4'hf</text>
<text class="w" x="273" y="300">4'h0</text><text class="w" x="646" y="300">4'h8</text><text class="w" x="752" y="300">4'h0</text><text class="w" x="859" y="300">4'h8</text><text class="w" x="966" y="300">4'hc</text><text class="w" x="1073" y="300">4'he</text><text class="w" x="1179" y="300">4'hd</text><text class="w" x="1286" y="300">4'h6</text>

<!-- right scrollbar -->
<rect x="1346" y="183" width="16" height="431" fill="#f0f0f0"/>
<rect x="1346" y="297" width="16" height="15" fill="#fff"/>
<rect x="1347" y="185" width="14" height="14" fill="#f8f8f8"/><path class="c" d="M1347 199.5H1361.5V185" stroke="#808080" fill="none"/><path d="M1350 194H1358L1354 190Z" fill="#000"/>
<rect x="1347" y="597" width="14" height="14" fill="#f8f8f8"/><path class="c" d="M1347 611.5H1361.5V597" stroke="#808080" fill="none"/><path d="M1350 602H1358L1354 606Z" fill="#000"/>
<rect x="1346" y="616" width="16" height="40" fill="#808080"/>
<rect x="1346" y="658" width="16" height="19" fill="#808080"/>

<!-- bottom pane -->
<rect x="4" y="616" width="158" height="22" fill="#808080"/>
<rect x="165" y="616" width="100" height="22" fill="#808080"/>
<rect x="4" y="639" width="48" height="17" fill="#808080"/>
<rect x="52" y="639" width="110" height="17" fill="#fff"/>
<rect x="165" y="639" width="100" height="17" fill="#fff"/>
<rect x="268" y="616" width="1075" height="40" fill="#000"/>
<text x="153" y="632" style="font-size:11px;fill:#e8e8e8;text-anchor:end">Now</text>
<text x="255" y="632" style="font-size:11px;fill:#e8e8e8;text-anchor:end">2000 ns</text>
<text x="153" y="652" style="font-size:11px;fill:#111;text-anchor:end">Cursor 1</text>
<text x="255" y="652" style="font-size:11px;fill:#111;text-anchor:end">174 ns</text>
<g transform="translate(13,622)"><path d="M0 9 4 2H9L12 9Z" fill="#a8b8d0"/><rect x="12" y="2" width="11" height="10" fill="#80b0e0" stroke="#c0d0e0"/><path class="c" d="M14 5H21M14 8H21" stroke="#fff"/><circle cx="29" cy="6" r="5" fill="#70c070" stroke="#b0d8b0"/><path class="c" d="M27 6H31M29 4V8" stroke="#fff"/></g>
<g transform="translate(15,642)"><path d="M3 6V3C3 0 8 0 8 3" fill="none" stroke="#d8a040" stroke-width="1.5"/><rect x="1" y="6" width="10" height="8" fill="#e8b040"/><path d="M14 13 23 3 26 5 17 14Z" fill="#90b0e0"/><circle cx="24" cy="3" r="2.5" fill="#c0d0f0"/><circle cx="31" cy="6" r="5" fill="#e06050" stroke="#f0a090"/><path class="c" d="M28 6H34" stroke="#fff" stroke-width="2"/></g>

<!-- ruler -->
<g class="c" fill="none">
<path d="M271 622H1339" stroke="#00c000" stroke-width="4" stroke-dasharray="1 4.34"/>
<path stroke="#10d010" d="M324.5 617V624M377.5 617V624M431.5 617V624M484.5 617V624M538.5 617V624M591.5 617V624M644.5 617V624M698.5 617V624M751.5 617V624M805.5 617V624M858.5 617V624M911.5 617V624M965.5 617V624M1018.5 617V624M1072.5 617V624M1125.5 617V624M1178.5 617V624M1232.5 617V624M1285.5 617V624"/>
<path stroke="#808080" d="M271 639.5H1339"/>
</g>
<g clip-path="url(#ruler)"><text class="r" x="276" y="637">ns</text><text class="r" x="377" y="637">100 ns</text><text class="r" x="484" y="637">200 ns</text><text class="r" x="591" y="637">300 ns</text><text class="r" x="698" y="637">400 ns</text><text class="r" x="804" y="637">500 ns</text><text class="r" x="911" y="637">600 ns</text><text class="r" x="1018" y="637">700 ns</text><text class="r" x="1125" y="637">800 ns</text><text class="r" x="1232" y="637">900 ns</text><text class="r" x="1321" y="637" style="text-anchor:start">1000</text></g>

<!-- cursor -->
<rect x="455" y="163" width="3" height="477" fill="#f8c000"/>
<rect x="438.5" y="640.5" width="35" height="15" fill="#000" stroke="#f8c000"/>
<text x="441" y="653" style="font-size:11px;fill:#f8c000" textLength="31" lengthAdjust="spacingAndGlyphs">174 ns</text>

<!-- h scrollbars -->
<rect x="4" y="657" width="1340" height="21" fill="#fff"/>
<rect x="12" y="659" width="150" height="18" fill="#ededed"/>
<rect x="165" y="659" width="100" height="18" fill="#ededed"/>
<rect x="268" y="659" width="1072" height="18" fill="#f0f0f0"/>
<rect x="790" y="659" width="550" height="18" fill="#c6c6c6"/>
<rect x="373" y="662" width="1" height="12" fill="#f0c830"/>
<g fill="#f8f8f8"><rect x="13" y="661" width="15" height="14"/><rect x="146" y="661" width="15" height="14"/><rect x="166" y="661" width="15" height="14"/><rect x="249" y="661" width="15" height="14"/><rect x="270" y="661" width="15" height="14"/><rect x="1325" y="661" width="15" height="14"/></g>
<path class="c" fill="none" stroke="#808080" d="M13 675.5H28.5V661M146 675.5H161.5V661M166 675.5H181.5V661M249 675.5H264.5V661M270 675.5H285.5V661M1325 675.5H1340.5V661"/>
<path d="M17 668 21 664V672Z M156 668 152 664V672Z M273 668 277 664V672Z M1336 668 1332 664V672Z" fill="#000"/>
<path d="M170 668 174 664V672Z M259 668 255 664V672Z" fill="#999"/>

<!-- bottom band & tabs -->
<rect y="678" width="1366" height="50" fill="#f0f0f0"/>
<rect y="678" width="1366" height="3" fill="#fff"/>
<rect y="681" width="1366" height="1" fill="#222"/>
<rect y="682" width="1366" height="1" fill="#555"/>
<g stroke="#222" fill="#d2d2d2">
<path d="M1 683V698Q1 703 6 703H76Q81 703 81 698V683"/>
<path d="M154 683V698Q154 703 159 703H225Q230 703 230 698V683"/>
<path d="M231 683V698Q231 703 236 703H303Q308 703 308 698V683"/>
<path d="M309 683V698Q309 703 314 703H362Q367 703 367 698V683"/>
<path d="M368 683V698Q368 703 373 703H495Q500 703 500 698V683"/>
<path d="M82 681V698Q82 704 87 704H148Q153 704 153 698V681" fill="#f4f4f4"/>
</g>
<g transform="translate(6,684)"><path d="M7 0 13 6 8 9 1 5Z" fill="#b020c8"/><rect x="9" y="6" width="8" height="7" fill="#10a040" stroke="#064"/><circle cx="9" cy="6" r="4" fill="#20d0f0"/><path d="M5 6 11 12 5 18-1 12Z" fill="#1a50f0"/></g>
<text x="26" y="696" class="t">Objects</text><path class="x" d="M70 689 77 696M77 689 70 696"/>
<g transform="translate(87,685)"><rect width="15" height="15" fill="#222" stroke="#888"/><rect x="1" y="2" width="13" height="3" fill="#c8c8c8"/><path class="c" d="M1 9H5V6H9V11H14" stroke="#20e020" fill="none"/><rect x="2" y="12" width="11" height="2" fill="#2030e0"/></g>
<text x="106" y="696" class="t">Wave</text><path class="x" d="M142 689 149 696M149 689 142 696"/>
<g transform="translate(159,684)"><path d="M1 16 3 13H13L16 16Z" fill="#000"/><rect x="3" y="3" width="2.5" height="10" fill="#20a040" stroke="#000" stroke-width=".5"/><rect x="6.5" y="1" width="2.5" height="12" fill="#8040c0" stroke="#000" stroke-width=".5"/><rect x="10" y="3" width="2.5" height="10" fill="#e8d020" stroke="#000" stroke-width=".5"/><path d="M14 4 15 13" stroke="#c02020" stroke-width="1.5"/></g>
<text x="178" y="696" class="t">Library</text><path class="x" d="M219 689 226 696M226 689 219 696"/>
<g transform="translate(235,684)"><rect x=".5" y="5.5" width="14" height="10" fill="#fff" stroke="#000"/><path class="c" d="M2 9H13M2 11H13M2 13H13" stroke="#000" stroke-dasharray="1 1"/><path d="M3 0V4M1 2 3 5 5 2M11 0V4M9 2 11 5 13 2" stroke="#12209c" fill="none"/></g>
<text x="254" y="696" class="t">Project</text><path class="x" d="M297 689 304 696M304 689 297 696"/>
<g transform="translate(314,684)"><path d="M3 0H14L15 11H4Z" fill="#fff" stroke="#000"/><path class="c" d="M5 3H12M5 6H12M5 9H12" stroke="#4a4ab0" stroke-dasharray="2 1"/><circle cx="3.5" cy="13" r="2.5" fill="#b01020" stroke="#000"/><circle cx="14" cy="13" r="2.5" fill="#b01020" stroke="#000"/></g>
<text x="333" y="696" class="t">sim</text><path class="x" d="M356 689 363 696M363 689 356 696"/>
<g transform="translate(375,685)"><path d="M.5 .5H9L12 3V15H.5Z" fill="#fff" stroke="#bbb"/><circle cx="6" cy="8" r="4" fill="#a08020" stroke="#333"/></g>
<text x="392" y="696" class="t" textLength="89" lengthAdjust="spacingAndGlyphs">reg_74LS194_tb.v</text><path class="x" d="M489 689 496 696M496 689 489 696"/>
<rect x="1345" y="683" width="10" height="14" fill="#f8f8f8" stroke="#bbb"/><rect x="1356" y="683" width="10" height="14" fill="#f8f8f8" stroke="#bbb"/>
<path d="M1351 686 1348 690 1351 694M1353 686 1350 690 1353 694M1359 686 1362 690 1359 694M1361 686 1364 690 1361 694" stroke="#222" fill="none"/>
<rect x="1345" y="698" width="21" height="6" fill="#c8c8c8"/>

<!-- status -->
<g class="c" fill="none" stroke="#a8a8a8"><path d="M3.5 727V707.5H172"/><path d="M178.5 727V707.5H275"/><path d="M280.5 727V707.5H479"/><path d="M483.5 727V707.5H1347.5V727"/></g>
<g class="c" fill="none" stroke="#fff"><path d="M3 727.5H172.5V708M178 727.5H275.5V708M280 727.5H479.5V708M483 727.5H1347"/></g>
<text x="10" y="721" class="s" textLength="56" lengthAdjust="spacingAndGlyphs">0 ns to 1 us</text>
<text x="180" y="721" class="s" textLength="93" lengthAdjust="spacingAndGlyphs">Project : coolsuxnu</text>
<text x="282" y="721" class="s" textLength="96" lengthAdjust="spacingAndGlyphs">Now: 2 us   Delta: 0</text>
<text x="484" y="721" class="s" textLength="172" lengthAdjust="spacingAndGlyphs">sim:/reg_74LS194_tb/#INITIAL#80</text>
<path d="M1354 727 1364 717M1358 727 1364 721M1362 727 1364 725" stroke="#999" fill="none"/>

<!-- taskbar -->
<rect y="728" width="1366" height="8" fill="url(#tb)"/>
<g clip-path="url(#bot)">
<ellipse cx="27" cy="742" rx="16" ry="13" fill="#8ea0b0" stroke="#dde"/>
<ellipse cx="83" cy="745" rx="15" ry="13" fill="#b8a070"/>
<rect x="135" y="731" width="32" height="12" rx="5" fill="#e02818"/>
<ellipse cx="212" cy="742" rx="14" ry="11" fill="#50b0e8"/>
<rect x="246" y="728" width="58" height="8" fill="#d0d8e0"/><rect x="260" y="732" width="30" height="4" fill="#2020e0"/><rect x="260" y="731" width="30" height="1" fill="#fff"/>
<rect x="308" y="728" width="59" height="8" fill="#c0ccd8"/><ellipse cx="337" cy="742" rx="13" ry="11" fill="#807830" stroke="#333"/>
<rect x="370" y="728" width="58" height="8" fill="#c0ccd8"/><ellipse cx="399" cy="742" rx="13" ry="11" fill="#2a4a70"/>
<rect x="1260" y="728" width="106" height="8" fill="#34363c"/>
<rect x="1303" y="733" width="20" height="3" fill="#eee" fill-opacity=".8"/>
</g>

<!-- badge -->
<rect x="0" y="460" width="4" height="30" fill="#c8c8c8"/>
<circle cx="-4" cy="440" r="23" fill="#fff" stroke="#999"/>
<circle cx="-4" cy="440" r="20.5" fill="#3ccc60"/>
<text x="1" y="444" style="font-size:12px;font-weight:bold;fill:#fff">26</text>
</svg>
</body></html>
